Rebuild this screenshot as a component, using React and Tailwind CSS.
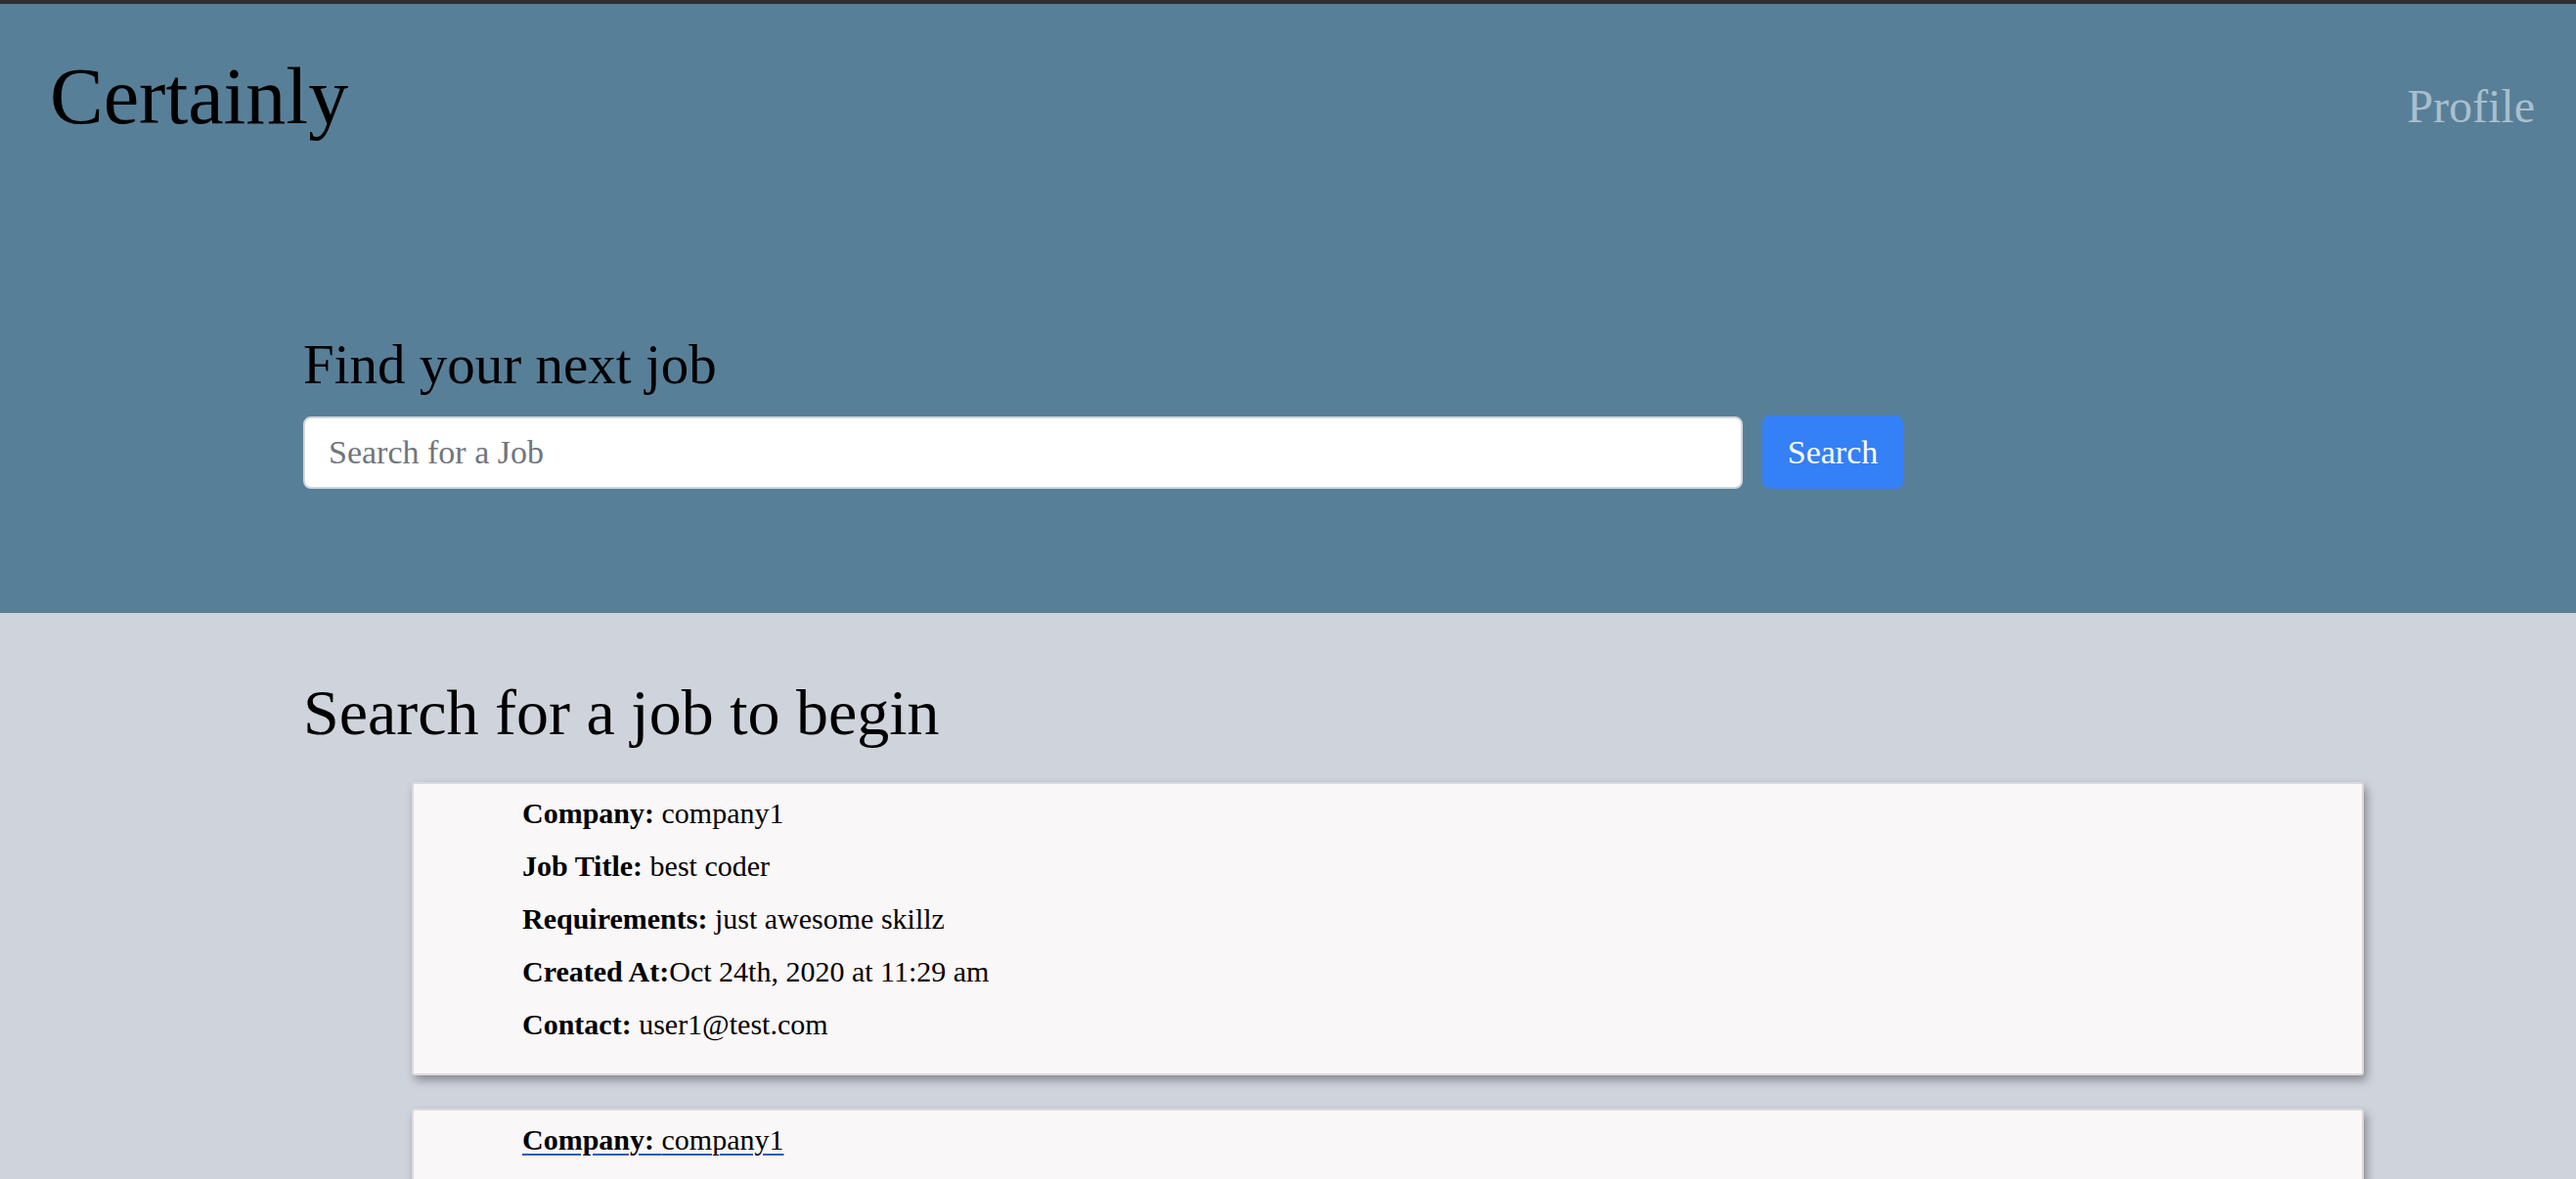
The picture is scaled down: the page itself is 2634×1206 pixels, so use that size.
import React from 'react';

const serif = { fontFamily: '"Liberation Serif", "Times New Roman", serif' };

const jobs = [
  {
    company: 'company1',
    title: 'best coder',
    requirements: 'just awesome skillz',
    createdAt: 'Oct 24th, 2020 at 11:29 am',
    contact: 'user1@test.com',
  },
  {
    company: 'company1',
    title: 'best coder',
    requirements: 'just awesome skillz',
    createdAt: 'Oct 24th, 2020 at 11:29 am',
    contact: 'user1@test.com',
    hovered: true,
  },
];

// single job card
const JobCard = ({ job }) => (
  <div className="ml-[111px] w-[1996px] bg-[#faf7f8] border-2 border-[#dcdadb] rounded-[3px] shadow-[3px_5px_10px_rgba(0,0,0,0.35)] pl-[111px] pt-[3px] pb-[23px] text-[30px] leading-[54px] text-black">
    <div>
      <span className={job.hovered ? 'underline decoration-[#2a5db0] decoration-2 underline-offset-4' : ''}>
        <b>Company:</b> {job.company}
      </span>
    </div>
    <div><b>Job Title:</b> {job.title}</div>
    <div><b>Requirements:</b> {job.requirements}</div>
    <div><b>Created At:</b>{job.createdAt}</div>
    <div><b>Contact:</b> {job.contact}</div>
  </div>
);

export default function App() {
  return (
    <div className="min-h-screen bg-[#cfd3dc]" style={serif}>
      <div className="h-[4px] bg-[#2e2f33]" />
      <header className="h-[623px] bg-[#587f98] flex flex-col">
        <nav className="flex justify-between items-start">
          <h1 className="ml-[51px] mt-[54px] text-[82px] leading-none text-black">Certainly</h1>
          <a className="mr-[42px] mt-[81px] text-[48px] leading-none text-[#a9bfcd]">Profile</a>
        </nav>
        <div className="ml-[310px] mt-[204px]">
          <h2 className="text-[57px] leading-none text-black">Find your next job</h2>
          <div className="flex items-center gap-[20px] mt-[24px]">
            <input
              className="w-[1472px] h-[74px] bg-white border-2 border-[#d3d6d9] rounded-[8px] px-[24px] text-[34px] text-[#495057] placeholder:text-[#70767d] outline-none"
              style={serif}
              placeholder="Search for a Job"
            />
            <button className="w-[144px] h-[75px] rounded-[8px] bg-[#3480f6] text-white text-[34px]" style={serif}>
              Search
            </button>
          </div>
        </div>
      </header>
      <main className="pl-[310px] pb-[60px]">
        <h2 className="pt-[69px] text-[66px] leading-none text-black">Search for a job to begin</h2>
        <div className="mt-[38px] flex flex-col gap-[34px]">
          {jobs.map((job, i) => (
            <JobCard key={i} job={job} />
          ))}
        </div>
      </main>
    </div>
  );
}
